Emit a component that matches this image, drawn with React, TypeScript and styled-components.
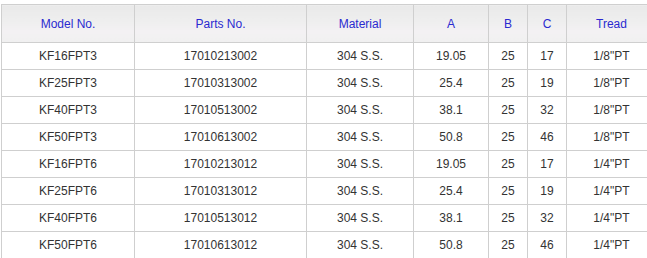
import React from 'react';
import styled, { createGlobalStyle } from 'styled-components';

const GlobalStyle = createGlobalStyle`
    html, body {
        margin: 0;
        padding: 0;
        background: #ffffff;
        overflow: hidden;
    }
`;

const Page = styled.div`
    padding-top: 4px;
    padding-left: 1px;
    width: 680px;
`;

const Table = styled.table`
    border-collapse: collapse;
    table-layout: fixed;
    width: 656px;
    font-family: 'Liberation Sans', Arial, sans-serif;
    font-size: 12px;
`;

const HeadCell = styled.th<{ $w: number }>`
    width: ${(p) => p.$w}px;
    height: 37px;
    padding: 0;
    border: 1px solid #cfcfcf;
    background: linear-gradient(to bottom, #e9e9e9 0%, #eeeeee 40%, #f3f1f3 70%, #f0f0f0 100%);
    color: #2a2ad0;
    font-weight: normal;
    text-align: center;
    vertical-align: middle;
`;

const Cell = styled.td`
    height: 26px;
    padding: 0;
    border: 1px solid #cfcfcf;
    color: #333333;
    text-align: center;
    vertical-align: middle;
`;

const columns = [
    { label: 'Model No.', w: 132 },
    { label: 'Parts No.', w: 171 },
    { label: 'Material', w: 106 },
    { label: 'A', w: 74 },
    { label: 'B', w: 38 },
    { label: 'C', w: 38 },
    { label: 'Tread', w: 89 },
];

const rows = [
    ['KF16FPT3', '17010213002', '304 S.S.', '19.05', '25', '17', '1/8"PT'],
    ['KF25FPT3', '17010313002', '304 S.S.', '25.4', '25', '19', '1/8"PT'],
    ['KF40FPT3', '17010513002', '304 S.S.', '38.1', '25', '32', '1/8"PT'],
    ['KF50FPT3', '17010613002', '304 S.S.', '50.8', '25', '46', '1/8"PT'],
    ['KF16FPT6', '17010213012', '304 S.S.', '19.05', '25', '17', '1/4"PT'],
    ['KF25FPT6', '17010313012', '304 S.S.', '25.4', '25', '19', '1/4"PT'],
    ['KF40FPT6', '17010513012', '304 S.S.', '38.1', '25', '32', '1/4"PT'],
    ['KF50FPT6', '17010613012', '304 S.S.', '50.8', '25', '46', '1/4"PT'],
];

const App: React.FC = () => {
    return (
        <Page>
            <GlobalStyle />
            <Table>
                <thead>
                    <tr>
                        {columns.map((c) => (
                            <HeadCell key={c.label} $w={c.w}>{c.label}</HeadCell>
                        ))}
                    </tr>
                </thead>
                <tbody>
                    {rows.map((r) => (
                        <tr key={r[0]}>
                            {r.map((v, i) => (
                                <Cell key={i}>{v}</Cell>
                            ))}
                        </tr>
                    ))}
                </tbody>
            </Table>
        </Page>
    );
};

export default App;
